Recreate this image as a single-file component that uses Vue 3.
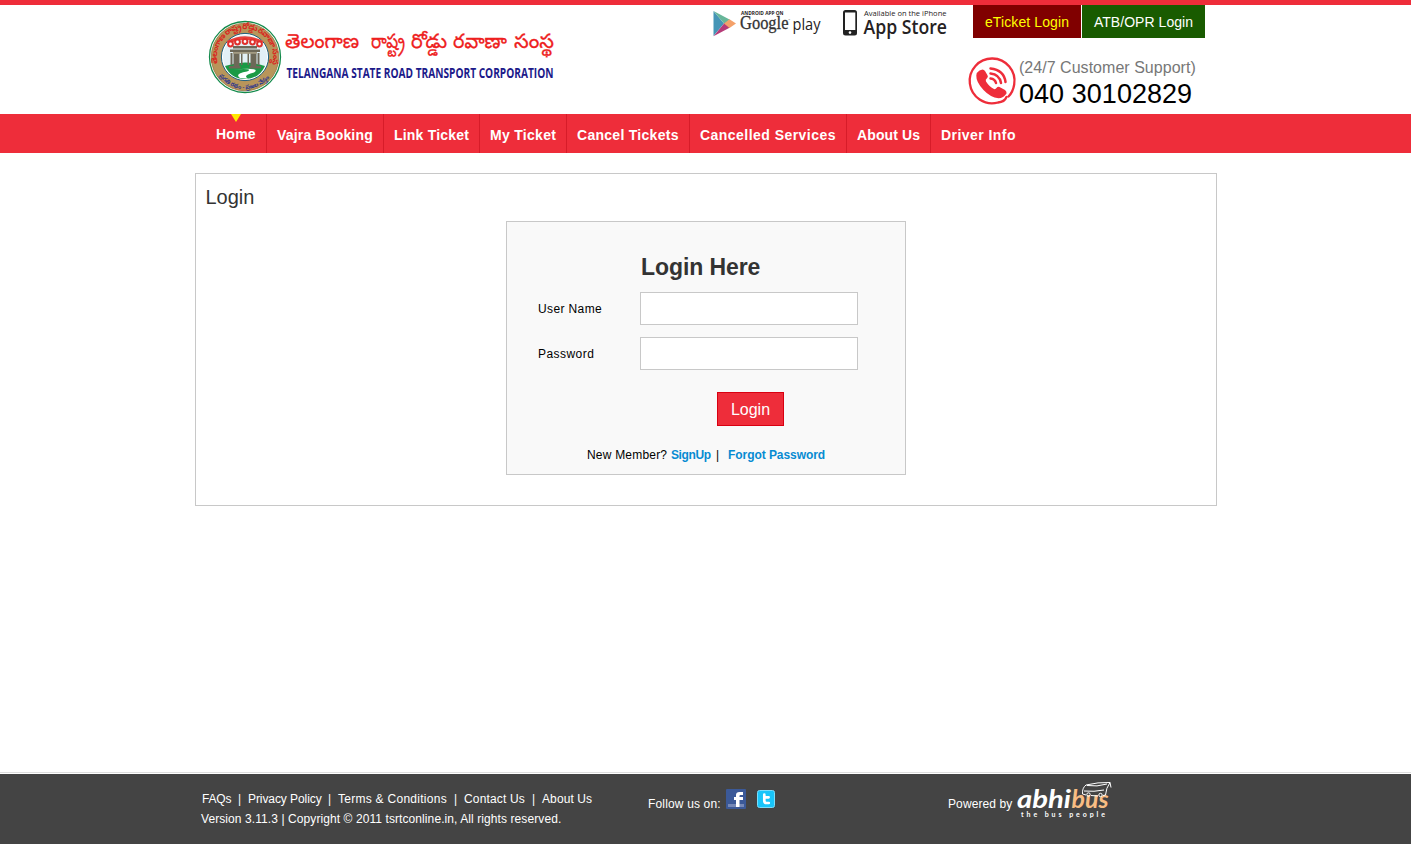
<script setup>
const nav = [
  { label: 'Home', track: 0.25 },
  { label: 'Vajra Booking', track: 0.2 },
  { label: 'Link Ticket', track: 0.2 },
  { label: 'My Ticket', track: 0.3 },
  { label: 'Cancel Tickets', track: 0.28 },
  { label: 'Cancelled Services', track: 0.46 },
  { label: 'About Us', track: 0.12 },
  { label: 'Driver Info', track: 0.45 },
]
const festoons = [[230.5, 44], [237.5, 42], [245, 41.5], [252.5, 42], [259.5, 44]]
</script>

<template>
  <div class="page">
    <header class="header">
      <div class="wrap head-row">
        <a class="brand">
          <svg width="360" height="80" viewBox="205 17 360 80">
            <defs>
              <path id="arcTop" d="M218 64.400 A28 28 0 1 1 272 64.400" />
              <path id="arcBottom" d="M219 75.650 A32 32 0 0 0 271 75.650" />
            </defs>
            <circle cx="245" cy="57" r="35.500" fill="#fff" stroke="#138a4b" stroke-width="1.300" />
            <circle cx="245" cy="57" r="33.800" fill="#b8955a" stroke="#8c6c36" stroke-width=".7" />
            <circle cx="245" cy="57" r="23.600" fill="#fff" stroke="#1d6080" stroke-width="1" />
            <circle cx="245" cy="57" r="22" fill="#e2f0f6" />
            <path d="M225 66 Q245 59 265 66 Q259 79 245 79 Q231 79 225 66" fill="#199a45" />
            <path d="M233 46h24v2.500h-24zM230 49.500h30v2.500h-30zM233.500 53h6v14h-6zM250.500 53h6v14h-6zM241 53h1.500v12h-1.500zM247.500 53h1.500v12h-1.500zM230.500 53h2v12h-2zM257.500 53h2v12h-2zM229 66h11.500v2.500h-11.500zM249.500 66h11.500v2.500h-11.500z" fill="#6d6858" />
            <path d="M233 52h24v1.800h-24z" fill="#a39b83" />
            <path d="M227.500 42.500 Q245 33.500 262.500 42.500" fill="none" stroke="#e8403c" stroke-width="3.500" />
            <g fill="#fff" stroke="#e0302c" stroke-width="2">
              <circle v-for="[x, y] in festoons" :key="x" :cx="x" :cy="y" r="2.400" />
            </g>
            <path d="M233 69.500 Q255 68 247 71.500 Q234 73.500 240 78 L248 78.700 Q242 75.500 254 72.500 Q262 67 233 69.500" fill="#fff" />
            <text class="ring" fill="#d9261f" font-size="8"><textPath href="#arcTop" textLength="102">తెలంగాణ రాష్ట్ర రోడ్డు రవాణా సంస్థ</textPath></text>
            <text class="ring" fill="#30388d" font-size="6"><textPath href="#arcBottom" textLength="58">ప్రగతి రథం - ప్రజల నేస్తం</textPath></text>
            <g class="telugu" font-size="20">
              <text x="285" y="48" textLength="74" lengthAdjust="spacingAndGlyphs">తెలంగాణ</text>
              <text x="371" y="48" textLength="34" lengthAdjust="spacingAndGlyphs">రాష్ట్ర</text>
              <text x="411" y="48" textLength="36" lengthAdjust="spacingAndGlyphs">రోడ్డు</text>
              <text x="453" y="48" textLength="54" lengthAdjust="spacingAndGlyphs">రవాణా</text>
              <text x="514" y="48" textLength="40" lengthAdjust="spacingAndGlyphs">సంస్థ</text>
            </g>
            <text class="corp" x="286.500" y="78" textLength="267" lengthAdjust="spacingAndGlyphs">TELANGANA STATE ROAD TRANSPORT CORPORATION</text>
          </svg>
        </a>
        <svg class="stores" width="240" height="36" viewBox="710 5 240 36">
          <path d="M713.500 11 L724 23.500 L713.500 36Z" fill="#4595b6" />
          <path d="M713.500 11 L730 19.800 L724.500 24Z" fill="#67b699" />
          <path d="M713.500 36.300 L730 27.500 L724.500 23Z" fill="#b63b78" />
          <path d="M729.500 19.300 L736 23.600 L729.500 27.900 L724 23.600Z" fill="#f4a16a" />
          <text class="open" x="741" y="14.500" font-size="4.800" font-weight="700" textLength="42.500" lengthAdjust="spacingAndGlyphs">ANDROID APP ON</text>
          <text class="google" x="740" y="29.300" textLength="48.500" lengthAdjust="spacingAndGlyphs">Google</text>
          <text class="open" x="788.500" y="21" font-size="2">™</text>
          <text class="open" x="792.500" y="29.500" font-size="17" textLength="28" lengthAdjust="spacingAndGlyphs">play</text>
          <rect x="843" y="10" width="14" height="25.500" rx="2.500" fill="#222" />
          <rect x="845" y="12.500" width="10.300" height="17.500" fill="#fff" />
          <circle cx="850" cy="32.600" r="1.300" fill="#fff" />
          <text class="open" x="864" y="15.500" font-size="7.800" textLength="82.500" lengthAdjust="spacingAndGlyphs">Available on the iPhone</text>
          <text class="open app" x="863.500" y="33.500" textLength="83.500" lengthAdjust="spacingAndGlyphs">App Store</text>
        </svg>
        <div class="right">
          <div class="logins"><a class="eticket">eTicket Login</a><a class="atb">ATB/OPR Login</a></div>
          <div class="support">
            <svg width="48" height="48" viewBox="0 0 48 48" fill="none" stroke="#ee2d3a">
              <path d="M40.500 39.500 Q45 35 46.200 27.500 A22.400 22.400 0 1 0 30 45.500 Q36.500 45 38.500 40" stroke-width="2.300" stroke-linecap="round" />
              <path d="M11.500 13.500 L14.500 12.500 Q16 12.500 17 14 L19.500 18.300 Q20.500 20 19 21.300 Q17 22.500 18 24.500 Q21.500 30 26 32 Q27.500 32.500 28.500 31 Q29.800 29.200 31.500 30 L37 33 Q39 34.500 38.500 36.500 Q35.500 41 30.500 41.300 Q22.500 40.500 15.500 33 Q8 25 8.300 18.500 Q8.700 15 11.500 13.500Z" fill="#ee2d3a" stroke="none" />
              <path d="M22.500 21.500 Q27 22 28 26 M22.500 16.500 Q31.500 17.500 33 26 M22.500 11.500 Q36 13 37.500 25" stroke-width="2.500" stroke-linecap="round" />
            </svg>
            <div><p class="hours">(24/7 Customer Support)</p><p class="phone">040 30102829</p></div>
          </div>
        </div>
      </div>
    </header>

    <nav class="nav">
      <div class="wrap nav-row">
        <a v-for="(n, i) in nav" :key="n.label" :class="{ active: i === 0 }" :style="{ letterSpacing: n.track + 'px' }">{{ n.label }}</a>
      </div>
    </nav>

    <main class="wrap panel">
      <h1>Login</h1>
      <form class="login" @submit.prevent>
        <h2>Login Here</h2>
        <label><span class="user">User Name</span><input type="text" /></label>
        <label><span class="pass">Password</span><input type="password" /></label>
        <button>Login</button>
        <p class="member"><span class="new">New Member?</span><a class="signup">SignUp</a><span class="bar">|</span><a class="forgot">Forgot Password</a></p>
      </form>
    </main>

    <footer class="footer">
      <div class="wrap foot-row">
        <div class="info">
          <p class="links"><a class="faq">FAQs</a><i>|</i><a class="privacy">Privacy Policy</a><i>|</i><a class="terms">Terms &amp; Conditions</a><i>|</i><a class="contact">Contact Us</a><i>|</i><a class="about">About Us</a></p>
          <p class="copy">Version 3.11.3 | Copyright © 2011 tsrtconline.in, All rights reserved.</p>
        </div>
        <div class="follow">
          <span>Follow us on:</span>
          <svg width="20" height="20" viewBox="0 0 20 20">
            <rect width="20" height="20" rx="1" fill="#3b5998" />
            <rect x="2" y="15" width="16" height="3" fill="#7588b7" />
            <path d="M10 18V11H8V8h2V6q0-3 3.500-3H17v3h-2.500q-1 0-1 1v1H17v3h-3.500v7z" fill="#fff" />
          </svg>
          <svg class="tw" width="18" height="18" viewBox="0 0 18 18">
            <rect x=".5" y=".5" width="17" height="17" rx="2" fill="#18c5fa" stroke="#79ddfb" />
            <path d="M7.300 4.700v6q0 2.300 2.300 2.300h2.200M7.300 7.300h4.300" fill="none" stroke="#fff" stroke-width="2.700" stroke-linecap="round" />
          </svg>
        </div>
        <div class="powered">
          <span>Powered by</span>
          <svg width="98" height="40" viewBox="1015 781 98 40">
            <text class="abhi" x="1017" y="808" textLength="54" lengthAdjust="spacingAndGlyphs" fill="#fff">abhi</text>
            <text class="abhi" x="1071.500" y="808" textLength="37" lengthAdjust="spacingAndGlyphs" fill="#f8bd83">bus</text>
            <text class="tag" x="1021" y="817" textLength="84">the bus people</text>
            <path d="M1082.500 794 Q1082 788 1086 785 Q1098 782 1110 782.500 M1082.500 794 L1086 795 M1091 795.500 L1098 796 M1103 795.500 L1105.500 795 Q1106 788 1110 782.500 M1084 791 Q1094 792 1104 790 M1087 785.500 Q1097 787 1107 784 M1110 782.500 l1 5" fill="none" stroke="#fff" stroke-width="1" />
            <circle cx="1088.500" cy="794.500" r="1.700" fill="none" stroke="#fff" />
            <circle cx="1100.500" cy="795" r="1.700" fill="none" stroke="#fff" />
          </svg>
        </div>
      </div>
    </footer>
  </div>
</template>

<style>
body { margin: 0; background: #fff; }
</style>

<style scoped>
* { box-sizing: border-box; }
p, h1, h2 { margin: 0; }
.page { height: 844px; display: flex; flex-direction: column; font: 12px/20px "Liberation Sans", Arial, sans-serif; color: #000; overflow: hidden; }
.wrap { width: 1022px; margin-left: 195px; }
.header { height: 114px; border-top: 5px solid #ee2d3a; }
.head-row { display: flex; align-items: flex-start; }
svg { display: block; flex: none; overflow: visible; }
.brand { margin: 12px 0 0 10px; }
.stores { margin-left: 145px; }
.right { margin-left: 18px; width: 240px; }
.ring, .telugu { font-family: "Noto Sans Telugu", "Noto Sans", sans-serif; }
.ring { font-weight: 700; }
.telugu { fill: #ee2020; stroke: #ee2020; stroke-width: .3px; }
.corp { font: 700 14.500px "Open Sans", sans-serif; fill: #1c1a8a; }
.open { font-family: "Open Sans", sans-serif; fill: #262223; }
.google { font: 19px "Liberation Serif", serif; fill: #333; stroke: #333; stroke-width: .3px; }
.app { font-size: 19.700px; font-weight: 600; }
.logins { display: flex; gap: 1px; margin-left: 5px; font-size: 14px; line-height: 34px; text-align: center; height: 33px; }
.eticket { width: 108px; background: #800000; color: #ff0; letter-spacing: .1px; }
.atb { width: 123px; background: #195b00; color: #fff; letter-spacing: .05px; }
.support { display: flex; margin-top: 19px; }
.support > div { margin-left: 3px; white-space: nowrap; }
.hours { font-size: 16px; line-height: 21px; color: #777; letter-spacing: .03px; }
.phone { font-size: 27px; line-height: 32px; letter-spacing: .04px; }
.nav { height: 39px; background: #ee2d3a; }
.nav-row { padding-left: 11px; height: 39px; display: grid; grid-template-rows: 39px; grid-template-columns: 61px 117px 96px 87px 123px 157px 84px 100px; }
.nav a { position: relative; height: 39px; padding-left: 10px; font-weight: 700; font-size: 14px; line-height: 43px; color: #fff; border-right: 1px solid #d71c29; white-space: nowrap; }
.nav a:last-child { border: 0; }
.nav .active { line-height: 41px; }
.active::before { content: ""; position: absolute; left: 25px; top: 0; border: 5px solid transparent; border-top: 8px solid #ffe800; border-bottom: 0; }
.panel { margin-top: 20px; height: 333px; border: 1px solid #c8c8c8; }
h1 { font-size: 20px; font-weight: 400; line-height: 24px; color: #333; padding: 11px 0 0 9.500px; }
.login { width: 400px; height: 254px; margin: 12px 0 0 310px; background: #f9f9f9; border: 1px solid #c8c8c8; padding: 31px 0 0 31px; }
h2 { font-size: 23px; line-height: 28px; color: #333; margin-left: 103px; letter-spacing: -.08px; }
.login label { display: flex; align-items: center; height: 33px; margin: 11px 0 12px; }
.login label + label { margin-top: 0; }
.login label span { width: 102px; }
.user { letter-spacing: .38px; }
.pass { letter-spacing: .45px; }
.login input { width: 218px; height: 33px; border: 1px solid #c8c8c8; background: #fff; padding: 0 8px; }
.login button { display: block; margin: 22px 0 0 179px; width: 67px; height: 34px; padding: 1px 0 0; background: #ee2d3a; border: 1px solid #d90011; color: #fff; font: 16px "Liberation Sans", Arial, sans-serif; }
.member { display: flex; margin: 19px 0 0 49px; white-space: nowrap; }
.new { width: 84px; letter-spacing: .2px; }
.member a { color: #078bd2; font-weight: 700; }
.member .signup { width: 45px; letter-spacing: -.4px; }
.bar { width: 12px; }
.member .forgot { letter-spacing: -.06px; }
.footer { margin-top: auto; height: 72px; border-top: 1px solid #ddd; padding-top: 1px; background: #444 content-box; color: #fff; }
.foot-row { display: flex; }
.info { width: 447px; padding: 15px 0 0 6px; white-space: nowrap; }
.links { display: flex; padding-left: 1px; }
.links i { font-style: normal; width: 17px; text-align: center; }
.faq { width: 29px; letter-spacing: -.2px; }
.privacy { width: 73px; letter-spacing: -.08px; }
.terms { width: 109px; letter-spacing: .27px; }
.contact { width: 61px; letter-spacing: .16px; }
.about { letter-spacing: .1px; }
.copy { letter-spacing: .085px; }
.follow { display: flex; width: 306px; padding: 15px 0 0 6px; }
.follow span, .powered span { padding-top: 5px; white-space: nowrap; }
.follow span { width: 78px; letter-spacing: .16px; }
.follow .tw { margin: 1px 0 0 11px; }
.powered { display: flex; padding-top: 15px; }
.powered span { width: 67px; letter-spacing: .1px; }
.powered svg { margin-top: -8px; }
.abhi { font: italic 700 24px Lato, sans-serif; }
.tag { font: 700 7px Lato, sans-serif; fill: #fff; }
</style>
